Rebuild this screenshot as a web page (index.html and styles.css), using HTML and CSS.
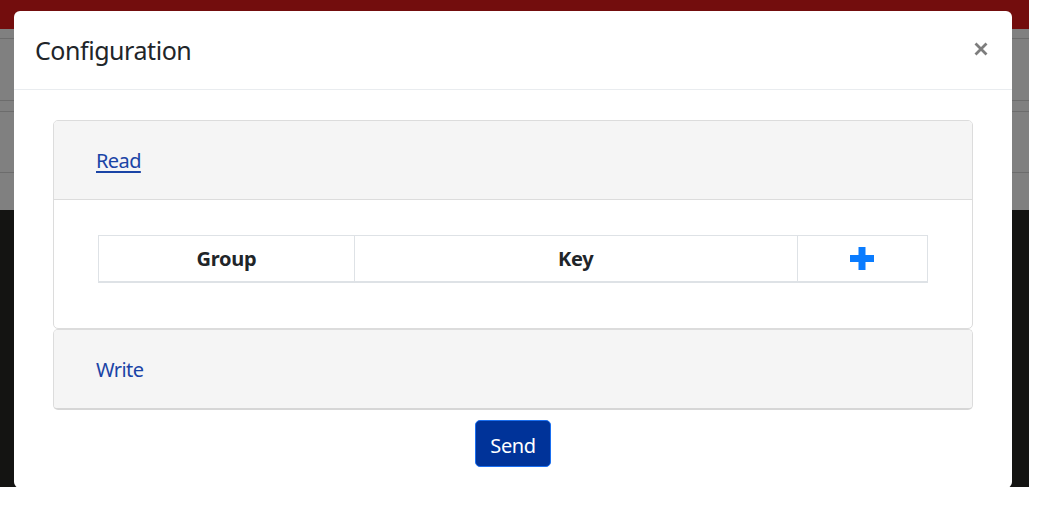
FILE: index.html
```html
<!DOCTYPE html>
<html>
<head>
<meta charset="utf-8">
<link rel="stylesheet" href="styles.css">
</head>
<body>
<div class="page">
  <div class="topbar"></div>
  <div class="graypanel">
    <div class="grow r1"></div>
    <div class="grow r2"></div>
    <div class="grow r3"></div>
    <div class="grow r4"></div>
    <div class="grow r5"></div>
  </div>
  <div class="darkpanel"></div>

  <div class="modal">
    <div class="modal-header">
      <h5 class="modal-title">Configuration</h5>
      <button class="close" aria-label="Close">
        <svg width="14" height="14" viewBox="0 0 14 14"><path d="M1.5 1.5 L12.5 12.5 M12.5 1.5 L1.5 12.5" stroke="#7d7d7d" stroke-width="2.8" stroke-linecap="butt"/></svg>
      </button>
    </div>
    <div class="modal-body">
      <div class="card">
        <div class="card-header"><a class="link underline" href="#">Read</a></div>
        <div class="card-body">
          <table class="table">
            <thead>
              <tr>
                <th class="c-group">Group</th>
                <th class="c-key">Key</th>
                <th class="c-add">
                  <svg width="24" height="23" viewBox="0 0 24 23"><path d="M8.5 0 H15.5 V8 H24 V15 H15.5 V23 H8.5 V15 H0 V8 H8.5 Z" fill="#0a7cff"/></svg>
                </th>
              </tr>
            </thead>
          </table>
        </div>
      </div>
      <div class="card card-write">
        <div class="card-header"><a class="link" href="#">Write</a></div>
      </div>
      <div class="actions">
        <button class="btn-send">Send</button>
      </div>
    </div>
  </div>
</div>
</body>
</html>
```

FILE: styles.css
```css
html, body {
  margin: 0;
  padding: 0;
  background: #ffffff;
}
body {
  font-family: "Noto Sans", "Open Sans", sans-serif;
  color: #212529;
}
.page {
  position: relative;
  width: 1029px;
  height: 487px;
  display: flex;
  flex-direction: column;
}
.topbar {
  height: 29px;
  background: #730d0d;
}
.graypanel {
  height: 181px;
  background: #808080;
  display: flex;
  flex-direction: column;
}
.grow {
  border-bottom: 1px solid #6c6c6c;
}
.r1 { height: 9px; }
.r2 { height: 61px; }
.r3 { height: 10px; }
.r4 { height: 60px; }
.r5 { border-bottom: none; flex: 1; }
.darkpanel {
  flex: 1;
  background: #141412;
}
.modal {
  position: absolute;
  left: 14px;
  top: 11px;
  width: 998px;
  background: #fff;
  border-radius: 6px;
}
.modal-header {
  height: 78px;
  border-bottom: 1px solid #e9ecef;
  display: flex;
  align-items: center;
  justify-content: space-between;
  padding: 0 24px 0 21px;
}
.modal-title {
  margin: 0;
  padding-top: 2px;
  font-size: 25px;
  font-weight: 400;
  line-height: 1.5;
  letter-spacing: -0.45px;
  color: #212529;
}
.close {
  background: none;
  border: none;
  padding: 0;
  margin-top: -2px;
  display: flex;
  cursor: pointer;
}
.modal-body {
  padding: 30px 39px 21px 39px;
}
.card {
  border: 1px solid #dcdcdc;
  border-radius: 5px;
  overflow: hidden;
  background: #fff;
}
.card-header {
  height: 78px;
  background: #f5f5f5;
  display: flex;
  align-items: center;
  padding-left: 42px;
  padding-top: 2px;
  box-sizing: border-box;
}
.card-body {
  border-top: 1px solid #dcdcdc;
  padding: 35px 44px 45px 44px;
}
.card-write {
  border-bottom: 2px solid #d6d6d6;
}
.card-write .card-header {
  height: 78px;
}
.link {
  font-size: 20px;
  color: #1a44a6;
  text-decoration: none;
  line-height: 1.5;
  letter-spacing: -0.6px;
}
.link.underline {
  text-decoration: underline;
  text-underline-offset: 3px;
  text-decoration-thickness: 2px;
}
.table {
  width: 830px;
  border-collapse: collapse;
}
.table th {
  height: 45px;
  padding: 0;
  border: 1px solid #dee2e6;
  border-bottom: 2px solid #dee2e6;
  font-size: 20px;
  font-weight: 700;
  letter-spacing: -0.3px;
  text-align: center;
  vertical-align: middle;
  color: #212529;
}
.c-group { width: 256px; }
.c-key { width: 444px; }
.c-add { width: 130px; }
.c-add svg { display: block; margin: 0 auto; }
.actions {
  display: flex;
  justify-content: center;
  padding-top: 10px;
}
.btn-send {
  width: 76px;
  height: 47px;
  background: #003399;
  border: 1px solid #1a6ff0;
  border-radius: 5px;
  color: #fff;
  font-family: "Noto Sans", "Open Sans", sans-serif;
  font-size: 20px;
  letter-spacing: -0.4px;
  padding: 3px 0 0 0;
}
```
